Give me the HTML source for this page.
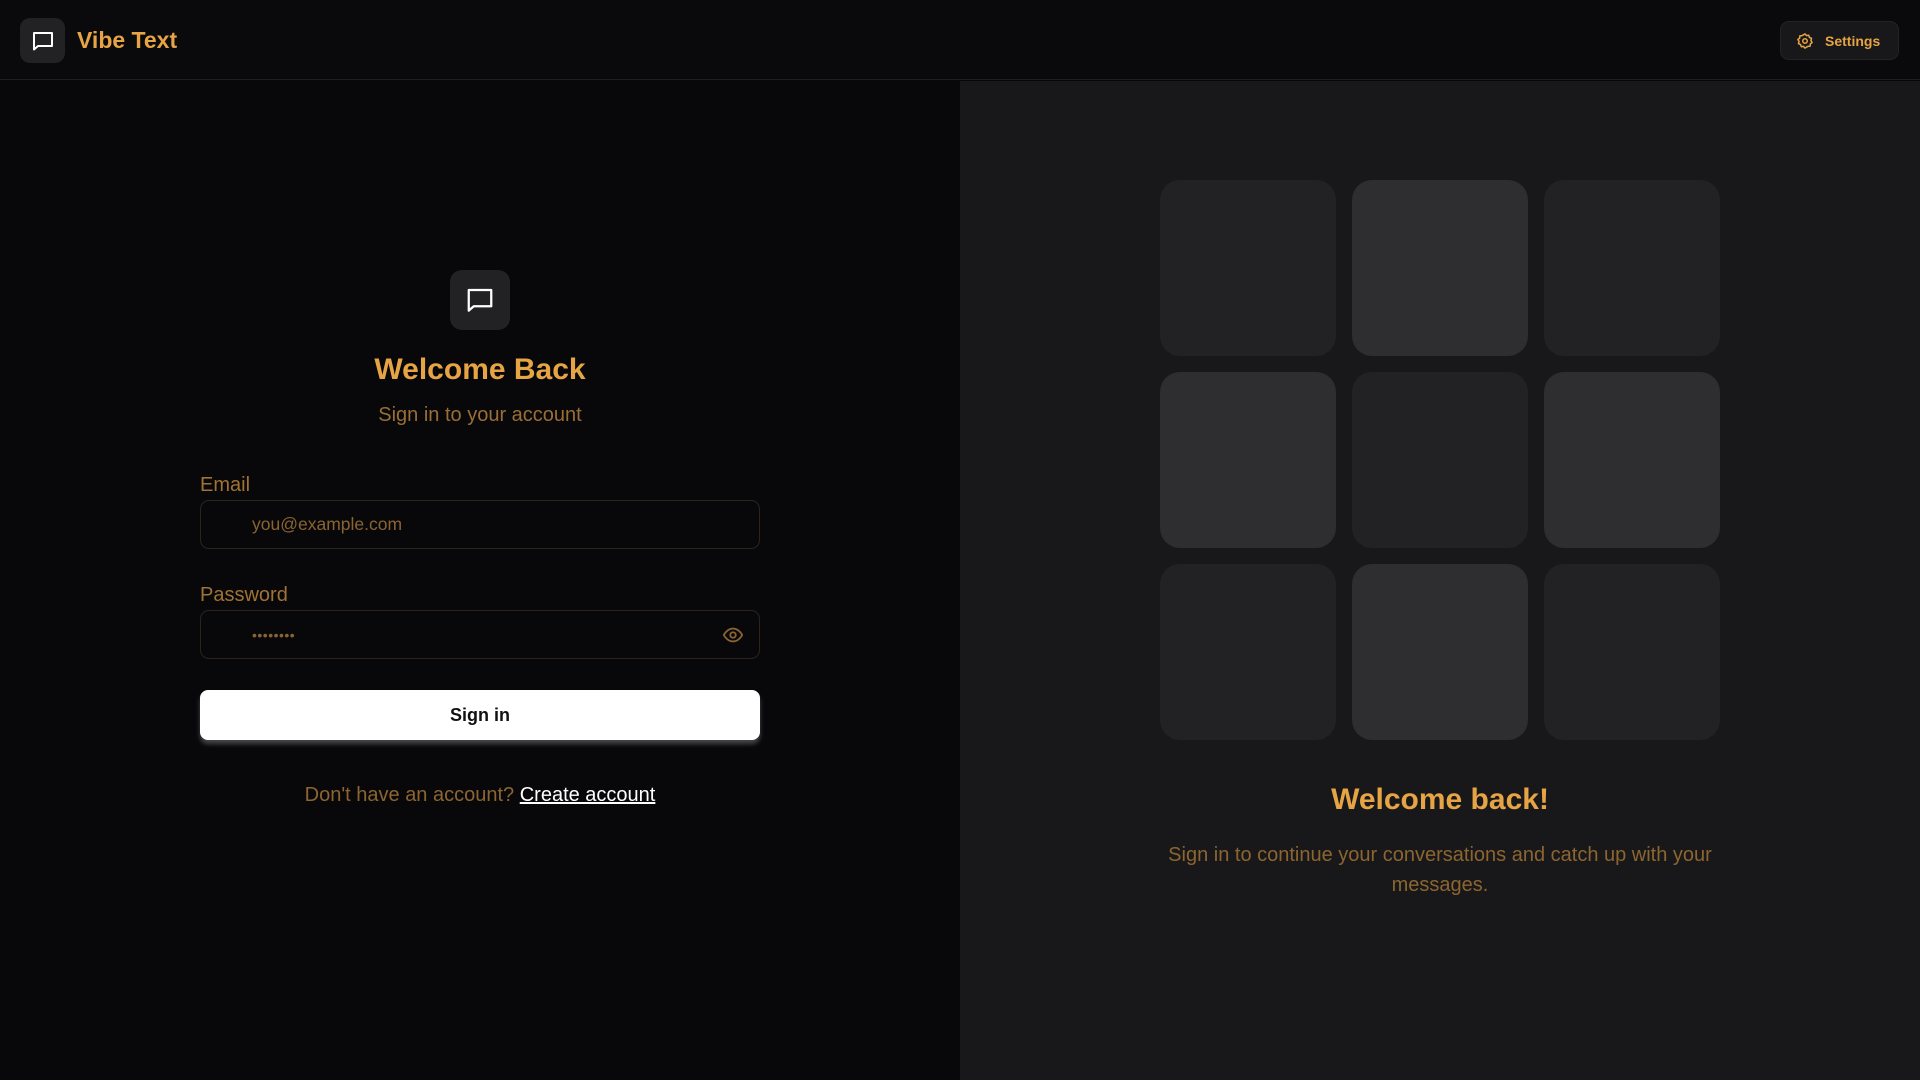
<!DOCTYPE html>
<html><head><meta charset="utf-8"><style>
*{box-sizing:border-box;margin:0;padding:0}
body{width:1920px;height:1080px;background:#08080a;font-family:"Liberation Sans",Arial,sans-serif;position:relative;overflow:hidden}
.hdr{position:absolute;left:0;top:0;width:1920px;height:80px;border-bottom:1px solid #1f1f22;background:#0a0a0c}
.logo{position:absolute;left:20px;top:18px;width:45px;height:45px;border-radius:10px;background:#222225;display:flex;align-items:center;justify-content:center}
.brand{position:absolute;left:77px;top:27px;font-size:23px;font-weight:bold;color:#e6a444}
.set{position:absolute;left:1780px;top:21px;width:119px;height:39px;border-radius:9px;background:#18181b;border:1px solid #232326;display:flex;align-items:center;padding-left:15px;color:#e6a444;font-size:14px;font-weight:bold}
.set span{margin-left:11px}
.right{position:absolute;left:960px;top:81px;width:960px;height:999px;background:#18181a}
.tile{position:absolute;width:176px;height:176px;border-radius:20px}
.d{background:#222224}.l{background:#2e2e31}
.ibox{position:absolute;left:450px;top:270px;width:60px;height:60px;border-radius:12px;background:#222225;display:flex;align-items:center;justify-content:center}
.c{position:absolute;text-align:center}
.lbl{position:absolute;left:200px;font-size:20px;color:#a07234}
.inp{position:absolute;left:200px;width:560px;height:49px;border:1px solid #2c2418;border-radius:9px;background:#08080a;color:#8a6430;font-size:17.5px;padding-left:51px;display:flex;align-items:center}
.btn{position:absolute;left:200px;top:690px;width:560px;height:50px;background:#fff;border-radius:8px;box-shadow:0 4px 5px rgba(255,255,255,.25);display:flex;align-items:center;justify-content:center;font-size:18px;font-weight:bold;color:#111}
</style></head><body>
<div class="hdr">
<div class="logo"><svg width="24" height="24" viewBox="0 0 24 24" fill="none" stroke="#fff" stroke-width="2" stroke-linejoin="round"><path d="M3 4h18v13H7l-4 3.5z"/></svg></div>
<div class="brand">Vibe Text</div>
<div class="set"><svg width="18" height="18" viewBox="0 0 24 24" fill="none" stroke="#e6a444" stroke-width="2" stroke-linejoin="round"><path d="M12 2.5l2 2.3 3-.4.9 2.9 2.8 1.2-.8 2.9 1.6 2.6-2.4 1.8-.2 3-3 .3L12 21.5l-2-2.3-3 .4-.9-2.9-2.8-1.2.8-2.9-1.6-2.6 2.4-1.8.2-3 3-.3z"/><circle cx="12" cy="12" r="3"/></svg><span>Settings</span></div>
</div>

<div class="ibox"><svg width="30" height="30" viewBox="0 0 24 24" fill="none" stroke="#fff" stroke-width="1.8" stroke-linejoin="round"><path d="M3 4h18v13H7l-4 3.5z"/></svg></div>
<div class="c" style="left:200px;width:560px;top:353px;font-size:30px;font-weight:bold;color:#e6a444">Welcome Back</div>
<div class="c" style="left:200px;width:560px;top:404px;font-size:20px;color:#9a6e34">Sign in to your account</div>
<div class="lbl" style="top:474px">Email</div>
<div class="inp" style="top:500px">you@example.com</div>
<div class="lbl" style="top:584px">Password</div>
<div class="inp" style="top:610px;font-size:14px;letter-spacing:0.5px">••••••••
<svg style="position:absolute;left:520px;top:13px" width="24" height="22" viewBox="0 0 24 24" fill="none" stroke="#8a6430" stroke-width="2"><path d="M2 12s3.5-7 10-7 10 7 10 7-3.5 7-10 7S2 12 2 12z"/><circle cx="12" cy="12" r="3"/></svg></div>
<div class="btn">Sign in</div>
<div class="c" style="left:200px;width:560px;top:784px;font-size:20px;color:#8c6530">Don't have an account? <span style="color:#fff;text-decoration:underline">Create account</span></div>

<div class="right"></div>
<div class="tile d" style="left:1160px;top:180px"></div>
<div class="tile l" style="left:1352px;top:180px"></div>
<div class="tile d" style="left:1544px;top:180px"></div>
<div class="tile l" style="left:1160px;top:372px"></div>
<div class="tile d" style="left:1352px;top:372px"></div>
<div class="tile l" style="left:1544px;top:372px"></div>
<div class="tile d" style="left:1160px;top:564px"></div>
<div class="tile l" style="left:1352px;top:564px"></div>
<div class="tile d" style="left:1544px;top:564px"></div>
<div class="c" style="left:1160px;width:560px;top:783px;font-size:30px;font-weight:bold;color:#e6a444">Welcome back!</div>
<div class="c" style="left:1150px;width:580px;top:840px;font-size:20px;line-height:30px;color:#8c6530">Sign in to continue your conversations and catch up with your messages.</div>
</body></html>
